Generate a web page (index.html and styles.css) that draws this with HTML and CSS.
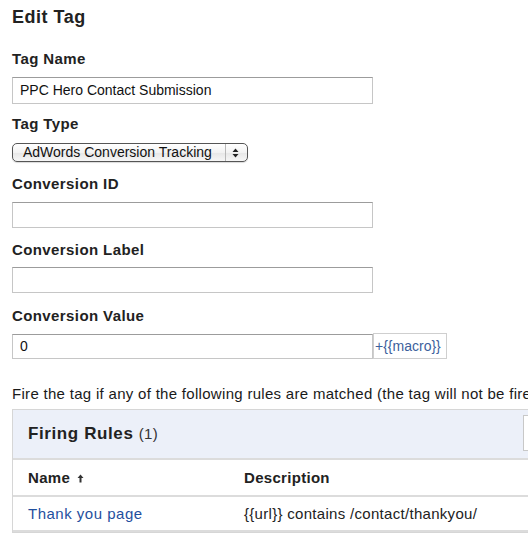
FILE: index.html
```html
<!DOCTYPE html>
<html>
<head>
<meta charset="utf-8">
<link rel="stylesheet" href="styles.css">
</head>
<body>
<div class="page">
  <h1 class="title">Edit Tag</h1>

  <div class="field f-name">
    <div class="label">Tag Name</div>
    <div class="input input-tall">PPC Hero Contact Submission</div>
  </div>

  <div class="field f-type">
    <div class="label">Tag Type</div>
    <div class="select">
      <span class="select-text">AdWords Conversion Tracking</span>
      <span class="select-arrows">
        <svg width="7" height="10" viewBox="0 0 7 10"><path d="M3.5 0.5 L6.5 4 L0.5 4 Z M3.5 9.5 L6.5 6 L0.5 6 Z" fill="#222"/></svg>
      </span>
    </div>
  </div>

  <div class="field f-id">
    <div class="label">Conversion ID</div>
    <div class="input"></div>
  </div>

  <div class="field f-label">
    <div class="label">Conversion Label</div>
    <div class="input"></div>
  </div>

  <div class="field f-value">
    <div class="label">Conversion Value</div>
    <div class="input-row">
      <div class="input input-short">0</div>
      <div class="macro">+{{macro}}</div>
    </div>
  </div>

  <p class="note">Fire the tag if any of the following rules are matched (the tag will not be fired if any blocking rules are matched):</p>

  <div class="table">
    <div class="table-head">
      <div class="table-title"><b>Firing Rules</b> <span class="count">(1)</span></div>
      <div class="search"></div>
    </div>
    <div class="row row-head">
      <div class="col-name">Name <svg class="sort" width="7" height="9" viewBox="0 0 7 9"><path d="M3.5 0.5 L6.5 4 L4.5 4 L4.5 8.5 L2.5 8.5 L2.5 4 L0.5 4 Z" fill="#333"/></svg></div>
      <div class="col-desc">Description</div>
    </div>
    <div class="row">
      <div class="col-name"><a class="link">Thank you page</a></div>
      <div class="col-desc">{{url}} contains /contact/thankyou/</div>
    </div>
  </div>
  <div class="footer-line"></div>
</div>
</body>
</html>
```

FILE: styles.css
```css
html, body {
  margin: 0;
  padding: 0;
  overflow: hidden;
  background: #fff;
}
body {
  font-family: "Liberation Sans", Arial, sans-serif;
  color: #222;
}
.page {
  padding: 5px 0 0 12px;
}
.title {
  margin: 0;
  font-size: 18px;
  line-height: 24px;
  font-weight: bold;
  letter-spacing: 0.5px;
  color: #222;
}
.field {
  margin-top: 13px;
}
.label {
  font-size: 15px;
  font-weight: bold;
  line-height: 18px;
  letter-spacing: 0.4px;
  margin-bottom: 8px;
  color: #222;
}
.f-name {
  margin-top: 21px;
}
.f-name .label {
  margin-bottom: 9px;
}
.f-type {
  margin-top: 11px;
}
.f-type .label {
  margin-bottom: 10px;
}
.f-id .label {
  margin-bottom: 9px;
}
.f-value {
  margin-top: 14px;
}
.input {
  box-sizing: border-box;
  width: 361px;
  height: 26px;
  border: 1px solid #c6c6c6;
  border-top-color: #9c9c9c;
  font-size: 14px;
  line-height: 24px;
  padding-left: 7px;
  color: #111;
}
.input-tall {
  height: 27px;
  line-height: 25px;
}
.input-row {
  display: flex;
  align-items: flex-end;
}
.input-short {
  width: 361px;
  height: 25px;
  line-height: 23px;
}
.macro {
  box-sizing: border-box;
  height: 26px;
  width: 74px;
  border: 1px solid #cfcfcf;
  font-size: 14px;
  line-height: 24px;
  padding-left: 1px;
  color: #3d5f9c;
}
.select {
  box-sizing: border-box;
  width: 236px;
  height: 19px;
  border: 1px solid #555;
  border-radius: 5px;
  background: linear-gradient(#ffffff, #f2f2f2 50%, #e6e6e6 51%, #f6f6f6);
  display: flex;
  align-items: center;
  font-size: 14px;
  color: #111;
  box-shadow: 0 1px 1px rgba(0,0,0,0.15);
}
.select-text {
  flex: 1;
  padding-left: 10px;
  line-height: 17px;
}
.select-arrows {
  width: 18px;
  height: 17px;
  border-left: 1px solid #b8b8b8;
  display: flex;
  align-items: center;
  justify-content: center;
  margin-right: 3px;
}
.note {
  margin: 26px 0 0 0;
  font-size: 15px;
  line-height: 18px;
  letter-spacing: 0.3px;
  white-space: nowrap;
  color: #1a1a1a;
}
.table {
  margin-top: 6px;
  width: 560px;
  border: 1px solid #d6d6d6;
  border-right: none;
}
.table-head {
  box-sizing: border-box;
  height: 50px;
  background: #ecf0f9;
  border-bottom: 2px solid #dcdcdc;
  display: flex;
  align-items: center;
  padding-left: 15px;
  position: relative;
}
.table-title {
  font-size: 17px;
  letter-spacing: 0.6px;
  color: #222;
  flex: 1;
}
.table-title .count {
  font-size: 15px;
  letter-spacing: 0.3px;
  color: #333;
}
.search {
  width: 60px;
  height: 36px;
  box-sizing: border-box;
  border: 1px solid #c8c8c8;
  background: #fff;
  position: absolute;
  left: 510px;
  top: 5px;
}
.row {
  display: flex;
  height: 35px;
  align-items: center;
  border-bottom: 2px solid #dcdcdc;
  box-sizing: border-box;
  font-size: 15px;
  letter-spacing: 0.3px;
  color: #222;
}
.row-head {
  height: 37px;
  font-weight: bold;
}
.col-name {
  width: 216px;
  padding-left: 15px;
}
.col-desc {
  flex: 1;
}
.sort {
  margin-left: 2px;
}
.link {
  color: #1f4f9e;
  letter-spacing: 0.5px;
  text-decoration: none;
}
.footer-line {
  margin-top: 7px;
  width: 162px;
  border-top: 2px solid #dedede;
}
```
